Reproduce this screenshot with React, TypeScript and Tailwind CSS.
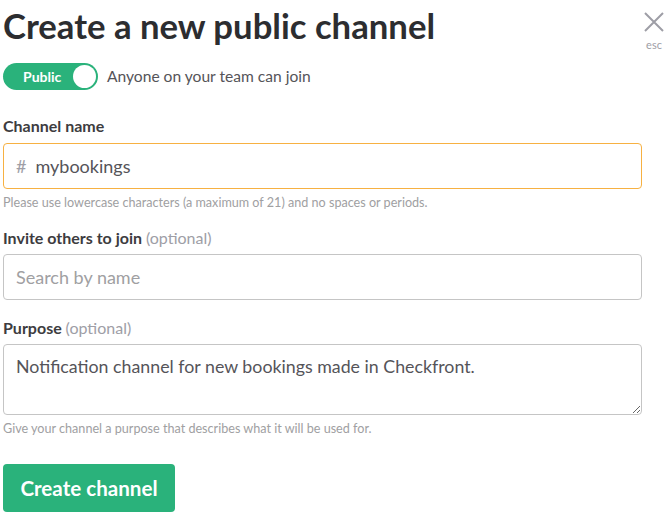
const App = () => {
  return (
    <div
      className="relative w-[670px] h-[522px] bg-white pl-[3px] pr-[28px]"
      style={{ fontFamily: "Lato, 'Open Sans', sans-serif" }}
    >
      {/* close */}
      <div className="absolute right-[6px] top-[12px] flex flex-col items-center w-[20px]">
        <svg width="20" height="20" viewBox="0 0 20 20">
          <path d="M1 1 L19 19 M19 1 L1 19" stroke="#9e9ea6" strokeWidth="2" />
        </svg>
        <span className="text-[11px] leading-[14px] text-[#9e9ea6] mt-[6px]">esc</span>
      </div>

      <h1 className="pt-[6px] text-[34.7px] leading-[40px] font-bold text-[#2c2d30]">
        Create a new public channel
      </h1>

      <div className="mt-[17px] flex items-center">
        <div className="flex items-center justify-between w-[95px] h-[27px] rounded-full bg-[#2ab27b] pl-[20px] pr-[2px]">
          <span className="text-white font-bold text-[14px] leading-none">Public</span>
          <span className="w-[23px] h-[23px] rounded-full bg-white" />
        </div>
        <span className="ml-[9px] text-[15.6px] text-[#555459]">Anyone on your team can join</span>
      </div>

      <label className="block mt-[26px] text-[16px] leading-[20px] font-bold text-[#3d3c40]">
        Channel name
      </label>
      <div className="mt-[7px] flex items-center h-[46px] w-[639px] border border-[#f7b142] rounded-[4px] pl-[12px]">
        <span className="text-[18px] text-[#9e9ea6]">#</span>
        <span className="ml-[9px] text-[18px] text-[#555459]">mybookings</span>
      </div>
      <p className="mt-[6px] text-[12.6px] leading-[16px] text-[#a0a0a2]">
        Please use lowercase characters (a maximum of 21) and no spaces or periods.
      </p>

      <label className="block mt-[17px] text-[16px] leading-[20px] font-bold text-[#3d3c40]">
        Invite others to join <span className="font-normal text-[#9e9ea6]">(optional)</span>
      </label>
      <input
        className="mt-[6px] block h-[46px] w-[639px] border border-[#c5c5c5] rounded-[4px] px-[12px] text-[18px] text-[#555459] placeholder:text-[#a0a0a2] outline-none"
        placeholder="Search by name"
      />

      <label className="block mt-[18px] text-[16px] leading-[20px] font-bold text-[#3d3c40]">
        Purpose <span className="font-normal text-[#9e9ea6]">(optional)</span>
      </label>
      <textarea
        className="mt-[6px] block h-[71px] w-[639px] border border-[#c5c5c5] rounded-[4px] px-[12px] py-[8px] text-[17.8px] leading-[26px] text-[#555459] outline-none"
        defaultValue="Notification channel for new bookings made in Checkfront."
      />
      <p className="mt-[6px] text-[12.6px] leading-[16px] text-[#a0a0a2]">
        Give your channel a purpose that describes what it will be used for.
      </p>

      <button className="mt-[27px] h-[48px] w-[172px] rounded-[4px] bg-[#2ab27b] text-white font-bold text-[20.6px]">
        Create channel
      </button>
    </div>
  );
};

export default App;
